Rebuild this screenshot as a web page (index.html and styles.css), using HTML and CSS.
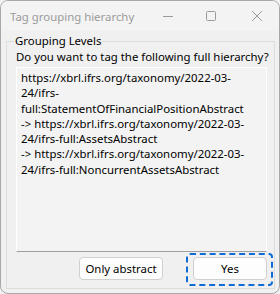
FILE: index.html
```html
<!DOCTYPE html>
<html>
<head>
<meta charset="utf-8">
<link rel="stylesheet" href="styles.css">
</head>
<body>
<div class="window">
  <div class="titlebar">
    <span class="title">Tag grouping hierarchy</span>
    <div class="controls">
      <svg class="ctl ctl-min" width="12" height="12" viewBox="0 0 12 12"><path d="M1 6.5h10" stroke="#9a9a9a" stroke-width="1"/></svg>
      <svg class="ctl ctl-max" width="12" height="12" viewBox="0 0 12 12"><rect x="1.5" y="1.5" width="9" height="9" rx="1" fill="none" stroke="#9a9a9a" stroke-width="1"/></svg>
      <svg class="ctl ctl-close" width="12" height="12" viewBox="0 0 12 12"><path d="M1 1L11 11M11 1L1 11" stroke="#9a9a9a" stroke-width="1"/></svg>
    </div>
  </div>
  <div class="content">
    <fieldset class="group">
      <legend class="legend">Grouping Levels</legend>
      <div class="question">Do you want to tag the following full hierarchy?</div>
      <div class="textbox">https://xbrl.ifrs.org/taxonomy/2022-03-<br>24/ifrs-<br>full:StatementOfFinancialPositionAbstract<br>-&gt; https://xbrl.ifrs.org/taxonomy/2022-03-<br>24/ifrs-full:AssetsAbstract<br>-&gt; https://xbrl.ifrs.org/taxonomy/2022-03-<br>24/ifrs-full:NoncurrentAssetsAbstract</div>
      <div class="buttons">
        <button class="btn btn-abstract">Only abstract</button>
        <button class="btn btn-yes">Yes</button>
      </div>
    </fieldset>
  </div>
</div>
</body>
</html>
```
FILE: styles.css
```css
html, body {
  margin: 0;
  padding: 0;
  background: #f0f0f0;
}
body {
  font-family: "Noto Sans", "Liberation Sans", sans-serif;
  font-size: 11.4px;
  color: #000;
}
.window {
  box-sizing: border-box;
  width: 280px;
  height: 294px;
  border: 1px solid #a8a8a8;
  border-radius: 8px;
  background: #f0f0f0;
  overflow: hidden;
  display: flex;
  flex-direction: column;
}
.titlebar {
  height: 30px;
  background: #f3f3f3;
  display: flex;
  align-items: center;
  flex: none;
}
.title {
  margin-left: 9px;
  color: #9b9b9b;
  font-size: 11.4px;
  line-height: 16px;
  margin-top: 1px;
}
.controls {
  margin-left: auto;
  display: flex;
  align-items: center;
  height: 100%;
}
.ctl { display: block; }
.ctl-min { margin-right: 31px; }
.ctl-max { margin-right: 34px; }
.ctl-close { margin-right: 16px; }
.content {
  flex: 1;
  padding: 2px 4px 0 5px;
}
.group {
  margin: 0;
  min-width: 0;
  padding: 0 7px 8px 9px;
  border: 1px solid #dcdcdc;
  border-radius: 0;
}
.legend {
  padding: 0 1px;
  margin-left: -2px;
  line-height: 16px;
  font-size: 11.4px;
}
.question {
  line-height: 16px;
  white-space: nowrap;
}
.textbox {
  box-sizing: border-box;
  margin-top: 2px;
  height: 185px;
  background: #f3f3f3;
  border-top: 1px solid #ffffff;
  border-left: 1px solid #ffffff;
  border-right: 1px solid #ffffff;
  border-bottom: 1px solid #a0a0a0;
  padding: 2px 0 0 4px;
  line-height: 15.3px;
  white-space: nowrap;
}
.buttons {
  display: flex;
  justify-content: flex-end;
  gap: 30px;
  margin-top: 5px;
}
.btn {
  box-sizing: border-box;
  height: 23px;
  border: 1px solid #d0d0d0;
  border-radius: 4px;
  background: #fdfdfd;
  font-family: inherit;
  font-size: 11.4px;
  color: #000;
  padding: 0;
  line-height: 20px;
}
.btn-abstract { width: 84px; }
.btn-yes {
  width: 74px;
  position: relative;
}
.btn-yes::after {
  content: "";
  position: absolute;
  top: -5px;
  left: -8px;
  right: -7px;
  bottom: -7px;
  border: 2px dashed #0f6cd5;
  border-radius: 4px;
}
```
